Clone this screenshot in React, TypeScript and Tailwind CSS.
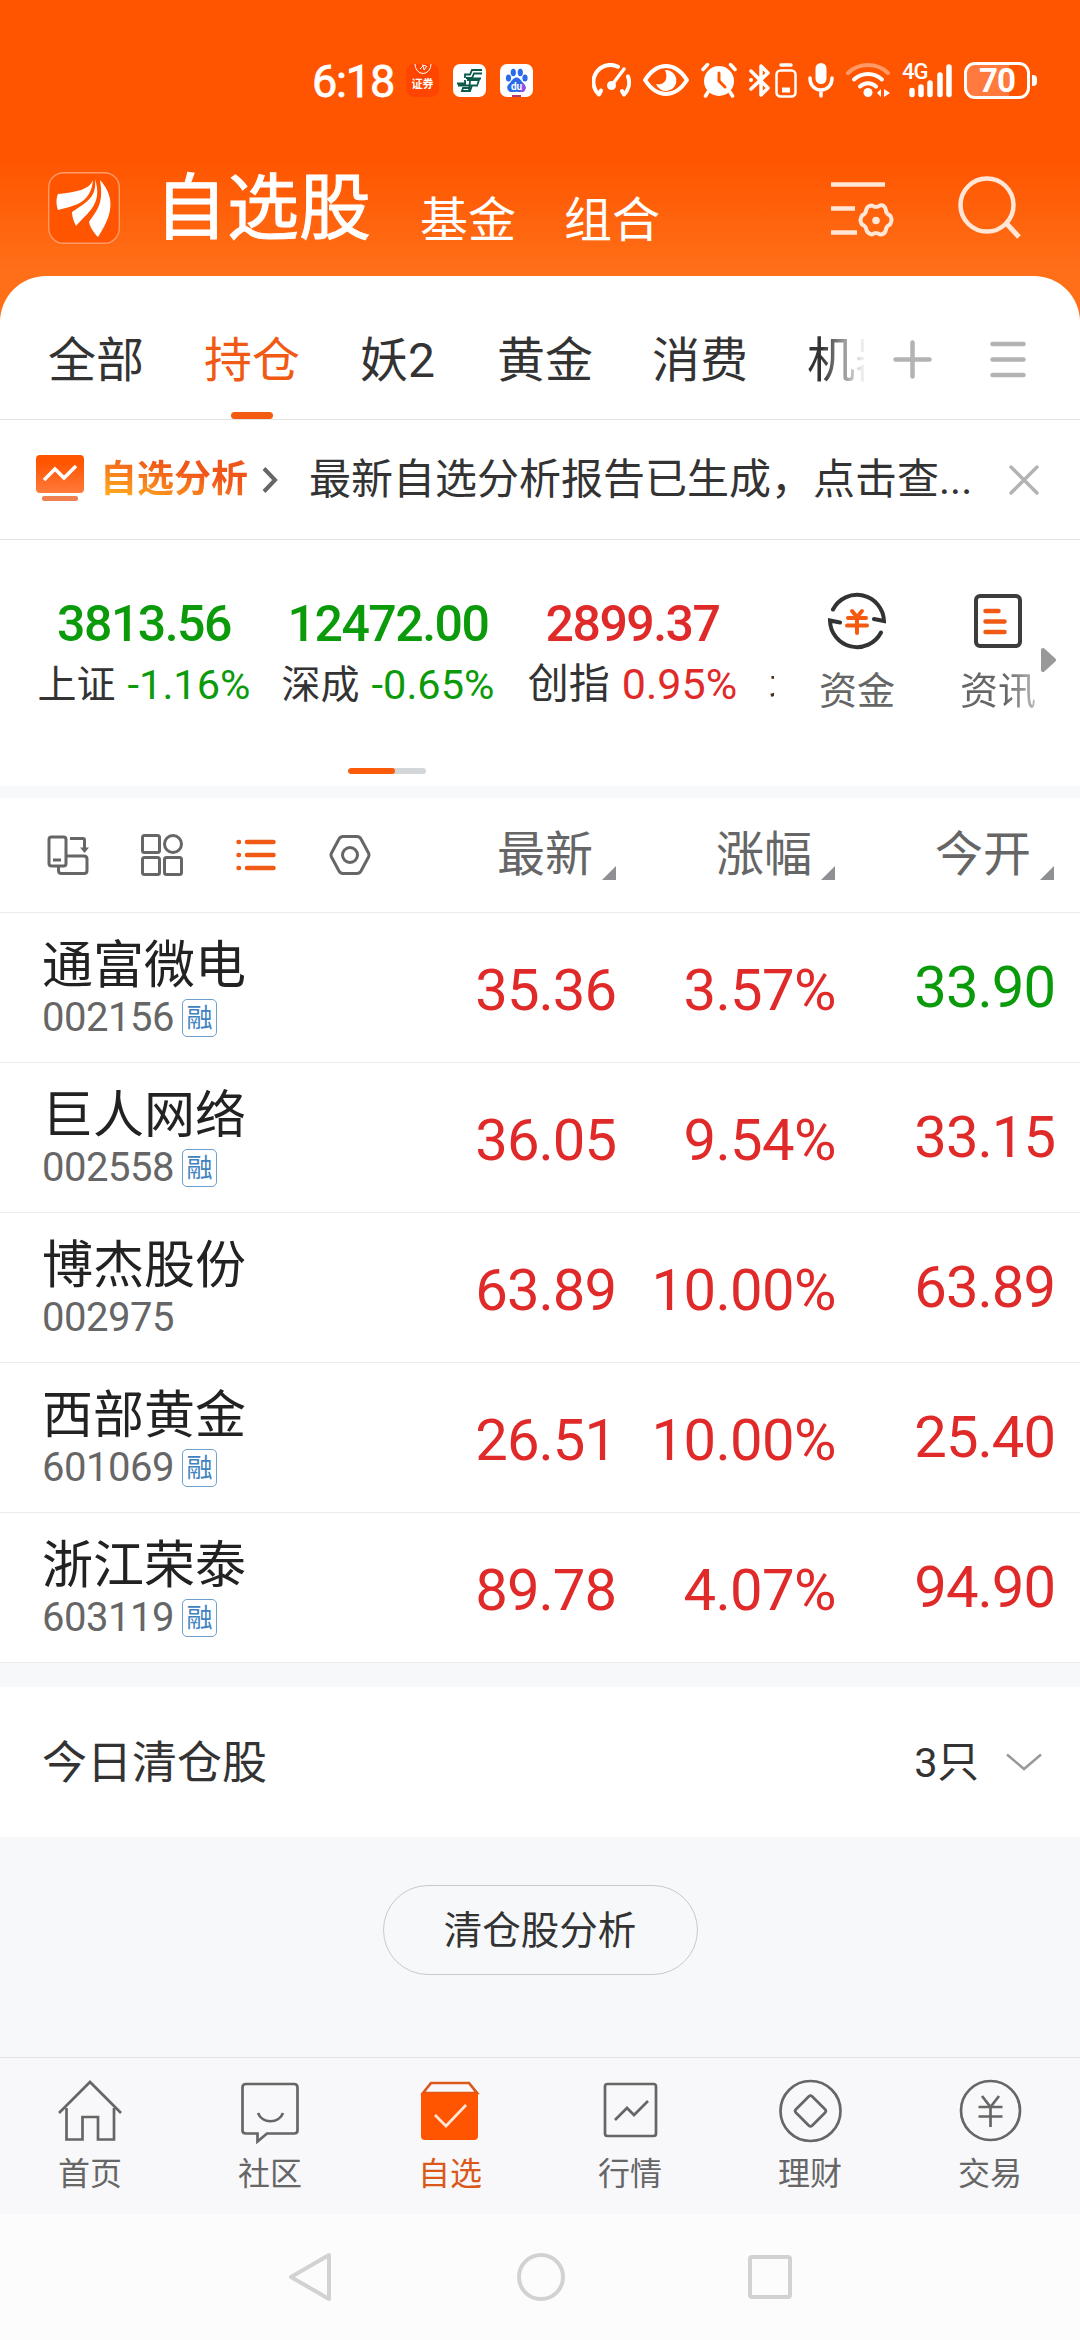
import type { ReactNode } from 'react';
import clsx from 'clsx';

type Stock = {
  name: string;
  code: string;
  margin: boolean;
  last: string;
  change: string;
  open: string;
  openDown?: boolean;
};

const stocks: Stock[] = [
  { name: '通富微电', code: '002156', margin: true, last: '35.36', change: '3.57%', open: '33.90', openDown: true },
  { name: '巨人网络', code: '002558', margin: true, last: '36.05', change: '9.54%', open: '33.15' },
  { name: '博杰股份', code: '002975', margin: false, last: '63.89', change: '10.00%', open: '63.89' },
  { name: '西部黄金', code: '601069', margin: true, last: '26.51', change: '10.00%', open: '25.40' },
  { name: '浙江荣泰', code: '603119', margin: true, last: '89.78', change: '4.07%', open: '94.90' },
];

function StatusBar() {
  return (
    <div className="flex h-[162px] items-start pt-[62px] pl-[312px] text-white">
      <span className="w-[94px] text-[45px] leading-[39px] tracking-[-1.2px] [-webkit-text-stroke:0.8px_white]">6:18</span>
      <div className="mt-0.5 flex gap-3.5">
        <div className="flex h-[33px] w-[33px] flex-col items-center overflow-hidden rounded-lg bg-[#ff4500]">
          <svg viewBox="0 0 18 11" className="h-[11px] w-[18px] shrink-0" fill="none" stroke="#fff">
            <path d="M1 0a8 9.500 0 0 0 16 0" />
            <path d="M6 5l3-3 1 4 3-4M8 1l4 1" />
          </svg>
          <span className="mt-[3px] text-[11px] leading-[13px] font-bold">证券</span>
        </div>
        <svg viewBox="0 0 33 33" className="h-[33px] w-[33px]">
          <rect width="33" height="33" rx="7" fill="#fff" />
          <g fill="none" stroke="#0b5a4a" strokeWidth="1.800">
            <path d="M29 6H19l-2 4.500h-5V14M29 9.500h-8L19 14h-6M17 17v-2.500h11M14 16h12l-1.500 4.500M4 19.500h9M5 21.500h20M12 16v5M17 17l-1 10h-6M19 21.500l-2 5.500H9l1-3h7" />
          </g>
        </svg>
        <svg viewBox="0 0 33 33" className="h-[33px] w-[33px]">
          <rect width="33" height="33" rx="7" fill="#fff" />
          <g fill="#2c6be8">
            <ellipse cx="8.500" cy="14" rx="2.600" ry="3.600" />
            <ellipse cx="13.300" cy="8.500" rx="2.600" ry="3.700" />
            <ellipse cx="20.300" cy="8.500" rx="2.600" ry="3.700" />
            <ellipse cx="25" cy="14" rx="2.600" ry="3.600" />
            <path d="M16.500 13.500c3 0 4 2.500 6 4.700s4 3.500 3 6.800-4 3.500-9 2.700c-5 .8-8 .600-9-2.700s1-4.600 3-6.800 3-4.700 6-4.700z" />
          </g>
          <path d="M22 19c3 2 4 4 3 7-1 2-3 2-5 2z" fill="#a04ae8" />
          <text x="16.500" y="25.500" textAnchor="middle" fontSize="10" fontWeight="700" fill="#fff">
            du
          </text>
          <path d="M12 31h9v2h-9z" fill="#b03a70" />
        </svg>
      </div>

      <svg viewBox="0 0 40 35" className="mt-px ml-[59px] h-[35px] w-10" fill="none" stroke="#fff" strokeWidth="4" strokeLinecap="round" strokeLinejoin="round">
        <path d="M26 3.700A17 17 0 0 0 7 31.500l2-4M36 13.500a17 17 0 0 1-4 18l-2-3.500" />
        <path d="M32 6L20 22" strokeWidth="3.500" />
        <circle cx="19.500" cy="22.500" r="2.500" fill="#fff" />
      </svg>
      <svg viewBox="0 0 46 32" className="mt-0.5 ml-[11px] h-8 w-[46px]">
        <path d="M2 16Q11 2 23 2t21 14Q35 30 23 30T2 16z" fill="none" stroke="#fff" strokeWidth="4" strokeLinejoin="round" />
        <path d="M22 6a10.500 10.500 0 1 1-9 14c5 1 9-1 10-5s0-6-1-9z" fill="#fff" />
      </svg>
      <svg viewBox="0 0 36 36" className="ml-3 h-9 w-9" stroke="#fff" strokeLinecap="round">
        <circle cx="18" cy="19" r="15" fill="#fff" stroke="none" />
        <path d="M2 7.500l4.500-5M34 7.500l-4.500-5M7 30l-2.500 4M29 30l2.500 4" strokeWidth="3.500" />
        <path d="M18 11v8l6 6" fill="none" stroke="#ff5500" strokeWidth="3" />
      </svg>
      <svg viewBox="0 0 22 35" className="mt-px ml-3 h-[35px] w-[22px]" fill="none" stroke="#fff" strokeWidth="3.500" strokeLinecap="round" strokeLinejoin="round">
        <path d="M2 8l17 17-7 7V3l7 7L2 26" />
        <circle cx="2" cy="17" r="1" fill="#fff" strokeWidth="2" />
      </svg>
      <svg viewBox="0 0 22 35" className="mt-px ml-1 h-[35px] w-[22px]" fill="none" stroke="#fff">
        <path d="M6 2h10" strokeWidth="3.500" strokeLinecap="round" />
        <rect x="1.500" y="7.500" width="19" height="26" rx="4" strokeWidth="2.500" />
        <path d="M7 27h8" strokeWidth="5" />
      </svg>
      <svg viewBox="0 0 26 35" className="mt-px ml-[11px] h-[35px] w-[26px]" fill="none" stroke="#fff" strokeWidth="3.500" strokeLinecap="round">
        <rect x="7.500" y="0" width="11" height="21" rx="5.500" fill="#fff" stroke="none" />
        <path d="M2 15c0 16 22 16 22 0M13 28v5" />
      </svg>
      <svg viewBox="0 0 44 35" className="mt-px ml-3 h-[35px] w-11" fill="none" stroke="#fff" strokeWidth="4" strokeLinecap="round">
        <path d="M2 10a29 29 0 0 1 40 0" strokeOpacity=".4" />
        <path d="M8 16.500a20.500 20.500 0 0 1 28 0M14 23.500a11.500 11.500 0 0 1 16 0" />
        <circle cx="22" cy="29.500" r="4.500" fill="#fff" stroke="none" />
        <path d="M31 30l4-4v8zM44 30l-6-4v8z" fill="#fff" stroke="none" />
      </svg>
      <div className="relative ml-3 h-9 w-[51px]">
        <span className="absolute top-0 left-0 text-[22px] leading-5 font-medium tracking-[-1px]">4G</span>
        <svg viewBox="0 0 51 36" className="h-9 w-[51px]" stroke="#fff" strokeWidth="5.500" strokeLinecap="round">
          <path d="M10 28.500v4M19 25v7.500M28 21v11.500M38 13v19.500M47 5v27.500" />
        </svg>
      </div>
      <div className="ml-[11px] flex h-[37px] w-[66px] items-center justify-center rounded-[11px] border-[3px] border-white bg-[linear-gradient(90deg,#ff7a3c_70%,transparent_70%)] text-[33px] leading-none font-bold tracking-[-1px]">
        70
      </div>
      <span className="mt-[13px] ml-0.5 h-[11px] w-[5px] rounded-r bg-white" />
    </div>
  );
}

function TopBar() {
  return (
    <div className="flex h-[114px] items-start pl-12 text-white">
      <svg viewBox="0 0 72 72" className="mt-2.5 h-[72px] w-[72px] shrink-0">
        <rect x=".7" y=".7" width="70.600" height="70.600" rx="15" fill="#ff5500" stroke="#ff9a66" strokeWidth="1.400" />
        <g fill="#fff">
          <path d="M45 8C42 17 30 20 10 22c-2 4-2 11 0 16 15-4 33-6 35-30z" />
          <path d="M47 7c2 18-8 23-23 33 0 5 2 10 4 14 12-14 27-22 19-47z" />
          <path d="M52 8c4 24-3 30-11 42 1 5 5 11 9 15 13-20 19-38 2-57z" />
        </g>
      </svg>
      <h1 className="ml-[35px] w-[217px] text-[72px] leading-[94px] whitespace-nowrap [-webkit-text-stroke:1px_white]">自选股</h1>
      <span className="ml-12 pt-[25px] text-[48px] leading-[68px]">基金</span>
      <span className="ml-12 pt-[25px] text-[48px] leading-[68px]">组合</span>
      <svg viewBox="0 0 64 56" className="mt-5 ml-[171px] h-14 w-16" fill="none" stroke="#ffe6d6" strokeWidth="4.500">
        <path d="M0 2.500h54M0 26.500h24M0 50.500h26" />
        <path
          strokeWidth="4"
          strokeLinejoin="round"
          d="M41 23.500q4 3 8 0 5-1 6 5 0 3 4 5 3 4 0 9-4 2-4 5-1 5-6 5-4-3-8 0-5-1-6-6 0-2-4-4-3-4 0-9 4-2 4-5 1-5 6-5z"
        />
        <circle cx="45" cy="38.500" r="3.800" fill="#ffe6d6" stroke="none" />
      </svg>
      <svg viewBox="0 0 64 64" className="mt-3.5 ml-[63px] h-16 w-16" fill="none" stroke="#ffe6d6" strokeWidth="4.500">
        <circle cx="29" cy="29" r="26.500" />
        <path d="M48 47l13 14" strokeWidth="5" />
      </svg>
    </div>
  );
}

function GroupTabs() {
  return (
    <div className="flex h-[144px] items-start overflow-hidden border-b border-[#e2e2e2] pt-[49px] pl-[48px] text-[48px] leading-[72px] text-[#333]">
      <span className="w-[156px]">全部</span>
      <div className="flex w-[156px] flex-col text-[#f05a14]">
        <span>持仓</span>
        <span className="mt-[15px] ml-[27px] h-[7px] w-[42px] rounded-full bg-[#f45a10]" />
      </div>
      <span className="w-[137px]">妖2</span>
      <span className="w-[155px]">黄金</span>
      <span className="w-[155px]">消费</span>
      <div className="w-[57px] overflow-hidden bg-[linear-gradient(90deg,#333_25%,#fff_105%)] bg-clip-text whitespace-nowrap text-transparent">
        机器
      </div>
      <svg viewBox="0 0 39 39" className="mt-[15px] ml-[29px] h-[39px] w-[39px]" stroke="#b3b3b3" strokeWidth="4.500" strokeLinecap="round">
        <path d="M2.500 19.500h34M19.500 2.500v34" />
      </svg>
      <svg viewBox="0 0 36 37" className="mt-4 ml-[58px] h-[37px] w-9" stroke="#b3b3b3" strokeWidth="4.500" strokeLinecap="round">
        <path d="M2.500 3h31M2.500 18.500h31M2.500 34h31" />
      </svg>
    </div>
  );
}

function Notice() {
  return (
    <div className="flex h-[120px] items-center border-b border-[#e2e2e2] pl-9 text-[#333]">
      <svg viewBox="0 0 48 46" className="mb-1 h-[46px] w-12">
        <defs>
          <linearGradient id="badge" x1="0" y1="0" x2="0" y2="1">
            <stop offset=".2" stopColor="#ff5500" />
            <stop offset="1" stopColor="#ff7a3c" />
          </linearGradient>
        </defs>
        <rect width="48" height="38" rx="4" fill="url(#badge)" />
        <rect x="6" y="41" width="36" height="5" rx="2" fill="#f08050" />
        <path d="M8 25l11-11 9 9 12-12" fill="none" stroke="#fff" strokeWidth="3.500" />
      </svg>
      <span className="ml-4 bg-[linear-gradient(195deg,#f0551a_35%,#ffa51e_80%)] bg-clip-text text-[37px] leading-[56px] font-bold text-transparent">
        自选分析
      </span>
      <svg viewBox="0 0 16 26" className="ml-[14px] h-[26px] w-4" fill="none" stroke="#666" strokeWidth="4">
        <path d="M2 1.500L13 13 2 24.500" />
      </svg>
      <span className="ml-[31px] w-[670px] text-[42px] leading-[60px] whitespace-nowrap">
        最新自选分析报告已生成，点击查...
      </span>
      <svg viewBox="0 0 30 30" className="ml-[30px] h-[30px] w-[30px]" stroke="#b3b3b3" strokeWidth="3.500" strokeLinecap="round">
        <path d="M2 2l26 26M28 2L2 28" />
      </svg>
    </div>
  );
}

function IndexQuote({ value, name, change, down, className }: { value: string; name: string; change: string; down?: boolean; className: string }) {
  const tone = down ? 'text-[#0a9a0a]' : 'text-[#e02a2a]';
  return (
    <div className={clsx('flex shrink-0 flex-col items-center', className)}>
      <span className={clsx('text-[50px] leading-[58px] font-medium tracking-[-1.5px]', tone)}>{value}</span>
      <div className={clsx('flex items-center gap-3 leading-[64px] whitespace-nowrap text-[#333]', down ? 'text-[39px]' : '-mt-px text-[41px]')}>
        <span>{name}</span>
        <span className={clsx(down ? 'text-[41.5px]' : 'text-[43px]', tone)}>{change}</span>
      </div>
    </div>
  );
}

function Indices() {
  return (
    <div className="flex h-[246px] flex-col">
      <div className="flex h-[228px] items-start pt-[55px]">
        <IndexQuote value="3813.56" name="上证" change="-1.16%" down className="ml-[37px] w-[214px]" />
        <IndexQuote value="12472.00" name="深成" change="-0.65%" down className="ml-[30px] w-[214px]" />
        <IndexQuote value="2899.37" name="创指" change="0.95%" className="ml-[31px] w-[213px]" />
        <div className="mt-[58px] ml-[30px] w-[5px] shrink-0 overflow-hidden text-[38px] leading-[64px] whitespace-nowrap text-[#333]">
          北证
        </div>
        <div className="ml-[45px] flex w-[76px] shrink-0 flex-col items-center text-[38px] leading-[56px] whitespace-nowrap text-[#666]">
          <svg viewBox="0 0 58 58" className="-mt-[3px] h-[58px] w-[58px]" fill="none" stroke="#333" strokeWidth="4" strokeLinecap="round">
            <path d="M5 17.500A27 27 0 0 1 56 29l-10-2M53 40.500A27 27 0 0 1 2 28.500l10 2" />
            <path d="M24 19l5 6 5-6M20 26h18M19 33.500h20M29 25v16" stroke="#f45a10" />
          </svg>
          <span className="mt-[13px]">资金</span>
        </div>
        <div className="ml-[65px] flex w-[76px] shrink-0 flex-col items-center text-[38px] leading-[56px] whitespace-nowrap">
          <svg viewBox="0 0 48 54" className="-mt-px h-[54px] w-12" fill="none" strokeLinecap="round">
            <rect x="2" y="2" width="44" height="50" rx="4" stroke="#3c3c3c" strokeWidth="4" />
            <path d="M11.500 17h13M11.500 27.500h19M11.500 38h19" stroke="#f05a14" strokeWidth="4.500" />
          </svg>
          <span className="mt-[15px] bg-[linear-gradient(90deg,#666_60%,#bbb_100%)] bg-clip-text text-transparent">资讯</span>
        </div>
        <svg viewBox="0 0 15 24" className="mt-[53px] ml-[5px] h-6 w-[15px] shrink-0" fill="#999" stroke="#999" strokeWidth="4" strokeLinejoin="round">
          <path d="M2 2l11 10L2 22z" />
        </svg>
      </div>
      <div className="ml-[348px] flex h-1.5 w-[78px] overflow-hidden rounded-full bg-[#d4d7da]">
        <span className="w-[47px] rounded-full bg-[#fa5a0a]" />
      </div>
    </div>
  );
}

function SortHeader({ children }: { children: ReactNode }) {
  return (
    <div className="flex w-[219px] items-center justify-end">
      <span className="text-[48px] leading-[70px]">{children}</span>
      <svg viewBox="0 0 14 14" className="mt-[35px] ml-[9px] h-3.5 w-3.5" fill="#8f9094">
        <path d="M14 0v14H0z" />
      </svg>
    </div>
  );
}

function TableHead() {
  return (
    <div className="flex h-[115px] items-center border-b border-[#ebebeb] pl-[47px] text-[#666]">
      <svg viewBox="0 0 42 42" className="h-[42px] w-[42px]" fill="none" stroke="#666" strokeWidth="3">
        <rect x="2" y="3" width="17" height="29" rx="2.500" />
        <path d="M6 26h8M23 4.500h13q1.500 0 1.500 1.500v9M19 22h18q3 0 3 3v11.500q0 3-3 3H14.500q-3 0-3-3V32" />
        <path d="M33 13.500h9l-4.500 5.500z" fill="#666" stroke="none" />
      </svg>
      <svg viewBox="0 0 42 42" className="ml-[52px] h-[42px] w-[42px]" fill="none" stroke="#666" strokeWidth="3">
        <rect x="1.500" y="1.500" width="17" height="17" rx="2" />
        <circle cx="32" cy="10" r="8.500" />
        <rect x="1.500" y="23.500" width="17" height="17" rx="2" />
        <rect x="23.500" y="23.500" width="17" height="17" rx="2" />
      </svg>
      <svg viewBox="0 0 40 34" className="ml-[53px] h-[34px] w-10" stroke="#f05a14" strokeWidth="4.500" strokeLinecap="round">
        <path d="M11 4h26.500M11 17h26.500M11 30h26.500M2.500 4h.5M2.500 17h.5M2.500 30h.5" />
      </svg>
      <svg viewBox="0 0 42 42" className="ml-[53px] h-[42px] w-[42px]" fill="none" stroke="#666" strokeWidth="3" strokeLinejoin="round">
        <path d="M14 2.500h14q2.500 0 4 2.500l7.500 14q1 2 0 4L32 37q-1.500 2.500-4 2.500H14q-2.500 0-4-2.500L2.500 23q-1-2 0-4L10 5q1.500-2.500 4-2.500z" />
        <circle cx="21" cy="21" r="7.500" />
      </svg>
      <div className="ml-[26px] flex">
        <SortHeader>最新</SortHeader>
        <SortHeader>涨幅</SortHeader>
        <SortHeader>今开</SortHeader>
      </div>
    </div>
  );
}

function StockRow({ stock }: { stock: Stock }) {
  return (
    <div className="flex h-[150px] items-start border-b border-[#ebebeb] pl-[42px] text-[58px] leading-[68px] tracking-[-1px] text-[#e02a2a]">
      <div className="w-[355px] pt-[15px]">
        <div className="text-[51px] leading-[75px] tracking-normal text-[#222]">{stock.name}</div>
        <div className="-mt-1 flex h-[38px] items-center gap-2 text-[40px] leading-[38px] tracking-[-0.5px] text-[#666]">
          {stock.code}
          {stock.margin && (
            <span className="flex h-[38px] w-[35px] items-center justify-center rounded-[5px] border-[1.5px] border-[#6ba0cf] text-[26px] leading-none tracking-normal text-[#3f82c0]">
              融
            </span>
          )}
        </div>
      </div>
      <span className="mt-[43px] w-[219px] text-right">{stock.last}</span>
      <span className="mt-[43px] w-[220px] text-right tracking-[-0.6px]">{stock.change}</span>
      <span className={clsx('mt-10 w-[219px] text-right', stock.openDown && 'text-[#0a9a0a]')}>{stock.open}</span>
    </div>
  );
}

const tabs = [
  {
    label: '首页',
    icon: (
      <>
        <path d="M1 34L32 3l31 31" />
        <path d="M8.500 29v31.500h16V38H40v22.500h16V29" />
      </>
    ),
  },
  {
    label: '社区',
    icon: (
      <>
        <path d="M8 5h48q3.500 0 3.500 3.500v43q0 3-3.500 3H29l-9.500 8v-8H8q-3.500 0-3.500-3v-43Q4.500 5 8 5z" />
        <path d="M20 34c4 11 21 11 25 0" />
      </>
    ),
  },
  {
    label: '自选',
    active: true,
    icon: (
      <>
        <path d="M5 14l8-10h38l8 10z" />
        <path d="M3 14h57v43q0 4-4 4H7q-4 0-4-4z" fill="#ff5500" stroke="none" />
        <path d="M17 36l11 11 20-21" stroke="#ffe6d6" />
      </>
    ),
  },
  {
    label: '行情',
    icon: (
      <>
        <rect x="7" y="5" width="51" height="52" rx="2.500" />
        <path d="M17 41l12-12 7 7 14-14" />
      </>
    ),
  },
  {
    label: '理财',
    icon: (
      <>
        <circle cx="32.500" cy="32" r="30" />
        <rect x="21" y="20.500" width="23" height="23" rx="2.500" transform="rotate(45 32.500 32)" />
      </>
    ),
  },
  {
    label: '交易',
    icon: (
      <>
        <circle cx="32.500" cy="31.500" r="29.500" />
        <path d="M24 17l8.500 11L41 17M20.500 28h24M20.500 37.500h24M32.500 28v20" />
      </>
    ),
  },
];

function TabBar() {
  return (
    <nav className="grid h-[157px] grid-cols-6 border-t border-[#e2e2e4] bg-[#f8f8fa]">
      {tabs.map((t) => (
        <div key={t.label} className={clsx('flex flex-col items-center pt-[21px]', t.active ? 'text-[#d9581a]' : 'text-[#666]')}>
          <svg viewBox="0 0 65 65" className="h-[65px] w-[65px]" fill="none" stroke="currentColor" strokeWidth="2.700">
            {t.icon}
          </svg>
          <span className="mt-1 text-[32px] leading-[53px]">{t.label}</span>
        </div>
      ))}
    </nav>
  );
}

function SystemNav() {
  return (
    <div className="flex h-[126px] items-center justify-center gap-[182px] bg-[#fcfcfc] pr-0.5">
      <svg viewBox="0 0 48 50" className="h-[50px] w-12" fill="none" stroke="#d2d2d2" strokeWidth="4" strokeLinejoin="round">
        <path d="M43 3v44L5 25z" />
      </svg>
      <svg viewBox="0 0 50 50" className="h-[50px] w-[50px]" fill="none" stroke="#d2d2d2" strokeWidth="4">
        <circle cx="25" cy="25" r="22" />
      </svg>
      <svg viewBox="0 0 44 44" className="h-11 w-11" fill="none" stroke="#d2d2d2" strokeWidth="4">
        <rect x="2" y="2" width="40" height="40" rx="2" />
      </svg>
    </div>
  );
}

export default function App() {
  return (
    <div className="flex h-[2340px] w-[1080px] flex-col overflow-hidden bg-[#f7f8fa] font-['Roboto','Noto_Sans_CJK_SC',sans-serif]">
      <div className="bg-[linear-gradient(180deg,#ff5500_0px,#ff5500_160px,#ff6f18_270px,#ff6f18_100%)]">
        <StatusBar />
        <TopBar />
        <div className="rounded-t-[46px] bg-white">
          <GroupTabs />
        </div>
      </div>
      <div className="bg-white">
        <Notice />
        <Indices />
      </div>
      <div className="mt-3 bg-white">
        <TableHead />
        {stocks.map((s) => (
          <StockRow key={s.code} stock={s} />
        ))}
      </div>
      <div className="mt-6 flex h-[150px] items-center bg-white pl-[42px] text-[#333]">
        <span className="flex-1 pt-[3px] text-[45px] leading-[66px]">今日清仓股</span>
        <span className="pt-px text-[41.500px] leading-[60px]">3只</span>
        <svg viewBox="0 0 36 18" className="mr-[38px] ml-[27px] h-[18px] w-9" fill="none" stroke="#999" strokeWidth="2.500">
          <path d="M1 1.500l17 14.500L35 1.500" />
        </svg>
      </div>
      <div className="flex h-[220px] items-start justify-center pt-12">
        <button className="h-[90px] w-[315px] rounded-full border-[1.5px] border-[#c8c9cc] pt-0.5 text-[38.500px] leading-none text-[#333]">
          清仓股分析
        </button>
      </div>
      <TabBar />
      <SystemNav />
    </div>
  );
}
